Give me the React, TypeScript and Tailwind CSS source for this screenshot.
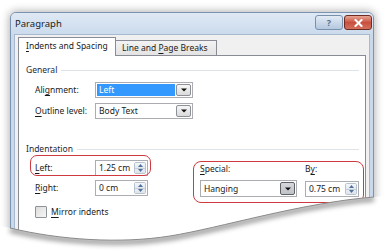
import React from 'react';

const TORN = 'M10,228 C60,240 120,244 170,236 S300,203 374,197';

function DropArrow({ pressed }: { pressed?: boolean }) {
  return (
    <div
      className={`flex w-[15px] items-center justify-center rounded-[2px] border ${
        pressed
          ? 'border-[#5f6368] bg-linear-to-b from-[#d6d8db] to-[#bfc2c6]'
          : 'border-[#8d9096] bg-linear-to-b from-[#f7f7f7] to-[#dadada]'
      }`}
    >
      <svg width="6" height="4" viewBox="0 0 6 4">
        <path d="M0 0.5h6L3 3.5z" fill="#111" />
      </svg>
    </div>
  );
}

function Combo({ value, selected, pressed, className = '' }: { value: string; selected?: boolean; pressed?: boolean; className?: string }) {
  return (
    <div className={`flex items-stretch border border-[#abadb3] bg-white p-px ${className}`}>
      <div className={`mr-px flex flex-1 items-center pl-[2px] ${selected ? 'bg-[#3399ff] text-white' : 'text-[#1a1a1a]'}`}>{value}</div>
      <DropArrow pressed={pressed} />
    </div>
  );
}

function Spin({ value, className = '' }: { value: string; className?: string }) {
  return (
    <div className={`flex h-[16px] items-stretch border border-[#abadb3] bg-white ${className}`}>
      <div className="flex flex-1 items-center pl-[3px]">{value}</div>
      <div className="my-px mr-px flex w-[12px] flex-col overflow-hidden rounded-[2px] border border-[#b9c2cd]">
        <div className="flex flex-1 items-center justify-center bg-linear-to-b from-[#f4f7fa] to-[#e3e9f0]">
          <svg width="5" height="3" viewBox="0 0 5 3"><path d="M0 3h5L2.5 0z" fill="#4f6f9c" /></svg>
        </div>
        <div className="flex flex-1 items-center justify-center border-t border-[#c6ced8] bg-linear-to-b from-[#e9eef4] to-[#dde4ec]">
          <svg width="5" height="3" viewBox="0 0 5 3"><path d="M0 0h5L2.5 3z" fill="#4f6f9c" /></svg>
        </div>
      </div>
    </div>
  );
}

function Heading({ text, className = '' }: { text: string; className?: string }) {
  return (
    <div className={`flex h-[12px] items-center gap-[4px] pl-[7px] pr-[6px] ${className}`}>
      <span className="text-[#1e2a3a]">{text}</span>
      <div className="h-px flex-1 bg-[#dce3e9]" />
    </div>
  );
}

function U({ c }: { c: string }) {
  return <span className="underline decoration-[0.5px] underline-offset-[1.5px]">{c}</span>;
}

export default function App() {
  return (
    <div className="relative h-[251px] w-[384px] overflow-hidden bg-white font-['Noto_Sans',sans-serif] text-[8.5px] leading-[12px] text-[#1a1a1a]">
      {/* dialog window */}
      <div className="ml-[10px] mt-[12px] flex h-[239px] w-[364px] flex-col rounded-t-[6px] border border-[#7b93ae] bg-[#c9d9eb] shadow-[0_0_9px_1px_rgba(0,0,0,0.3)]">
        {/* title bar */}
        <div className="flex h-[21px] items-start justify-between rounded-t-[5px] bg-linear-to-b from-[#dfe9f5] to-[#cbdbed] pl-[4px] pr-px">
          <span className="mt-[4px] text-[9.5px] leading-[13px] text-[#1b1b1b]">Paragraph</span>
          <div className="mt-[2px] flex gap-px">
            <div className="flex h-[15px] w-[28px] items-center justify-center rounded-[3px] border border-[#7990ad] bg-linear-to-b from-[#e2ebf5] to-[#b4c8df] text-[9px] font-bold leading-none text-[#5d6f86]">
              ?
            </div>
            <div className="flex h-[15px] w-[28px] items-center justify-center rounded-[3px] border border-[#6e2b22] bg-linear-to-b from-[#e7a595] via-[#c9503f] to-[#d2705c]">
              <svg width="9" height="8" viewBox="0 0 9 8">
                <path d="M1.5 1l6 6M7.5 1l-6 6" stroke="#fff" strokeWidth="2" strokeLinecap="square" />
              </svg>
            </div>
          </div>
        </div>

        {/* client area */}
        <div className="mx-[3px] flex flex-1 flex-col border border-[#a8bad0] bg-[#f0f0f0] px-[3px] pt-[2px]">
          {/* tabs */}
          <div className="relative z-10 flex h-[19px] items-end">
            <div className="flex h-[19px] w-[98px] items-center border border-b-0 border-[#898c95] bg-white pl-[7px] pb-[2px]">
              <span><U c="I" />ndents and Spacing</span>
            </div>
            <div className="flex h-[16px] w-[101px] items-center border border-l-0 border-[#898c95] bg-linear-to-b from-[#f3f3f3] to-[#e3e3e3] pl-[6px]">
              <span>Line and <U c="P" />age Breaks</span>
            </div>
          </div>

          {/* tab panel */}
          <div className="relative -mt-px flex-1 border border-[#898c95] bg-white">
            <div className="flex flex-col pt-[8px]">
              <Heading text="General" />
              <div className="mt-[6px] flex flex-col gap-[5px] pl-[16px]">
                <div className="flex items-center">
                  <span className="w-[60px]">Ali<U c="g" />nment:</span>
                  <Combo value="Left" selected className="h-[16px] w-[98px]" />
                </div>
                <div className="flex items-center">
                  <span className="w-[60px]"><U c="O" />utline level:</span>
                  <Combo value="Body Text" className="h-[16px] w-[98px]" />
                </div>
              </div>

              <Heading text="Indentation" className="mt-[24px]" />
              <div className="mt-[5px] flex pl-[16px]">
                <div className="flex w-[165px] flex-col">
                  <div className="flex items-center">
                    <span className="w-[60px]"><U c="L" />eft:</span>
                    <Spin value="1.25 cm" className="w-[53px]" />
                  </div>
                  <div className="mt-[4px] flex items-center">
                    <span className="w-[60px]"><U c="R" />ight:</span>
                    <Spin value="0 cm" className="w-[53px]" />
                  </div>
                  <div className="mt-[10px] flex items-center gap-[4px]">
                    <div className="h-[12px] w-[12px] rounded-[1px] border border-[#8f9296] bg-linear-to-br from-[#dcdcdc] to-[#f7f7f7]" />
                    <span><U c="M" />irror indents</span>
                  </div>
                </div>
                <div className="flex gap-[8px]">
                  <div className="flex w-[97px] flex-col">
                    <div className="flex h-[16px] items-center pt-[2px]"><span><U c="S" />pecial:</span></div>
                    <Combo value="Hanging" pressed className="mt-[4px] h-[17px] w-[97px]" />
                  </div>
                  <div className="flex w-[54px] flex-col">
                    <div className="flex h-[16px] items-center pt-[2px]"><span>B<U c="y" />:</span></div>
                    <Spin value="0.75 cm" className="mt-[5px] w-[54px]" />
                  </div>
                </div>
              </div>
            </div>

            {/* red annotation boxes */}
            <div className="absolute left-[11px] top-[99px] h-[21px] w-[121px] rounded-[7px] border-[1.5px] border-[#cf3a40]" />
            <div className="absolute left-[174px] top-[105px] h-[42px] w-[171px] rounded-[8px] border-[1.5px] border-[#cf3a40]" />
          </div>
        </div>
      </div>

      {/* torn bottom edge */}
      <svg className="pointer-events-none absolute inset-0" width="384" height="251" viewBox="0 0 384 251">
        <defs>
          <filter id="soft" x="-10%" y="-50%" width="120%" height="200%">
            <feGaussianBlur stdDeviation="2.5" />
          </filter>
          <clipPath id="below">
            <path d={`M0,226 L10,228 ${TORN.slice(TORN.indexOf('C'))} L384,196 L384,251 L0,251 Z`} />
          </clipPath>
        </defs>
        <path d={`M0,226 L10,228 ${TORN.slice(TORN.indexOf('C'))} L384,196 L384,251 L0,251 Z`} fill="#fff" />
        <g clipPath="url(#below)">
          <path d={TORN} fill="none" stroke="#000" strokeOpacity="0.4" strokeWidth="5" filter="url(#soft)" transform="translate(0,2)" />
        </g>
        <path d={TORN} fill="none" stroke="#8a8a8a" strokeWidth="1" />
      </svg>
    </div>
  );
}
